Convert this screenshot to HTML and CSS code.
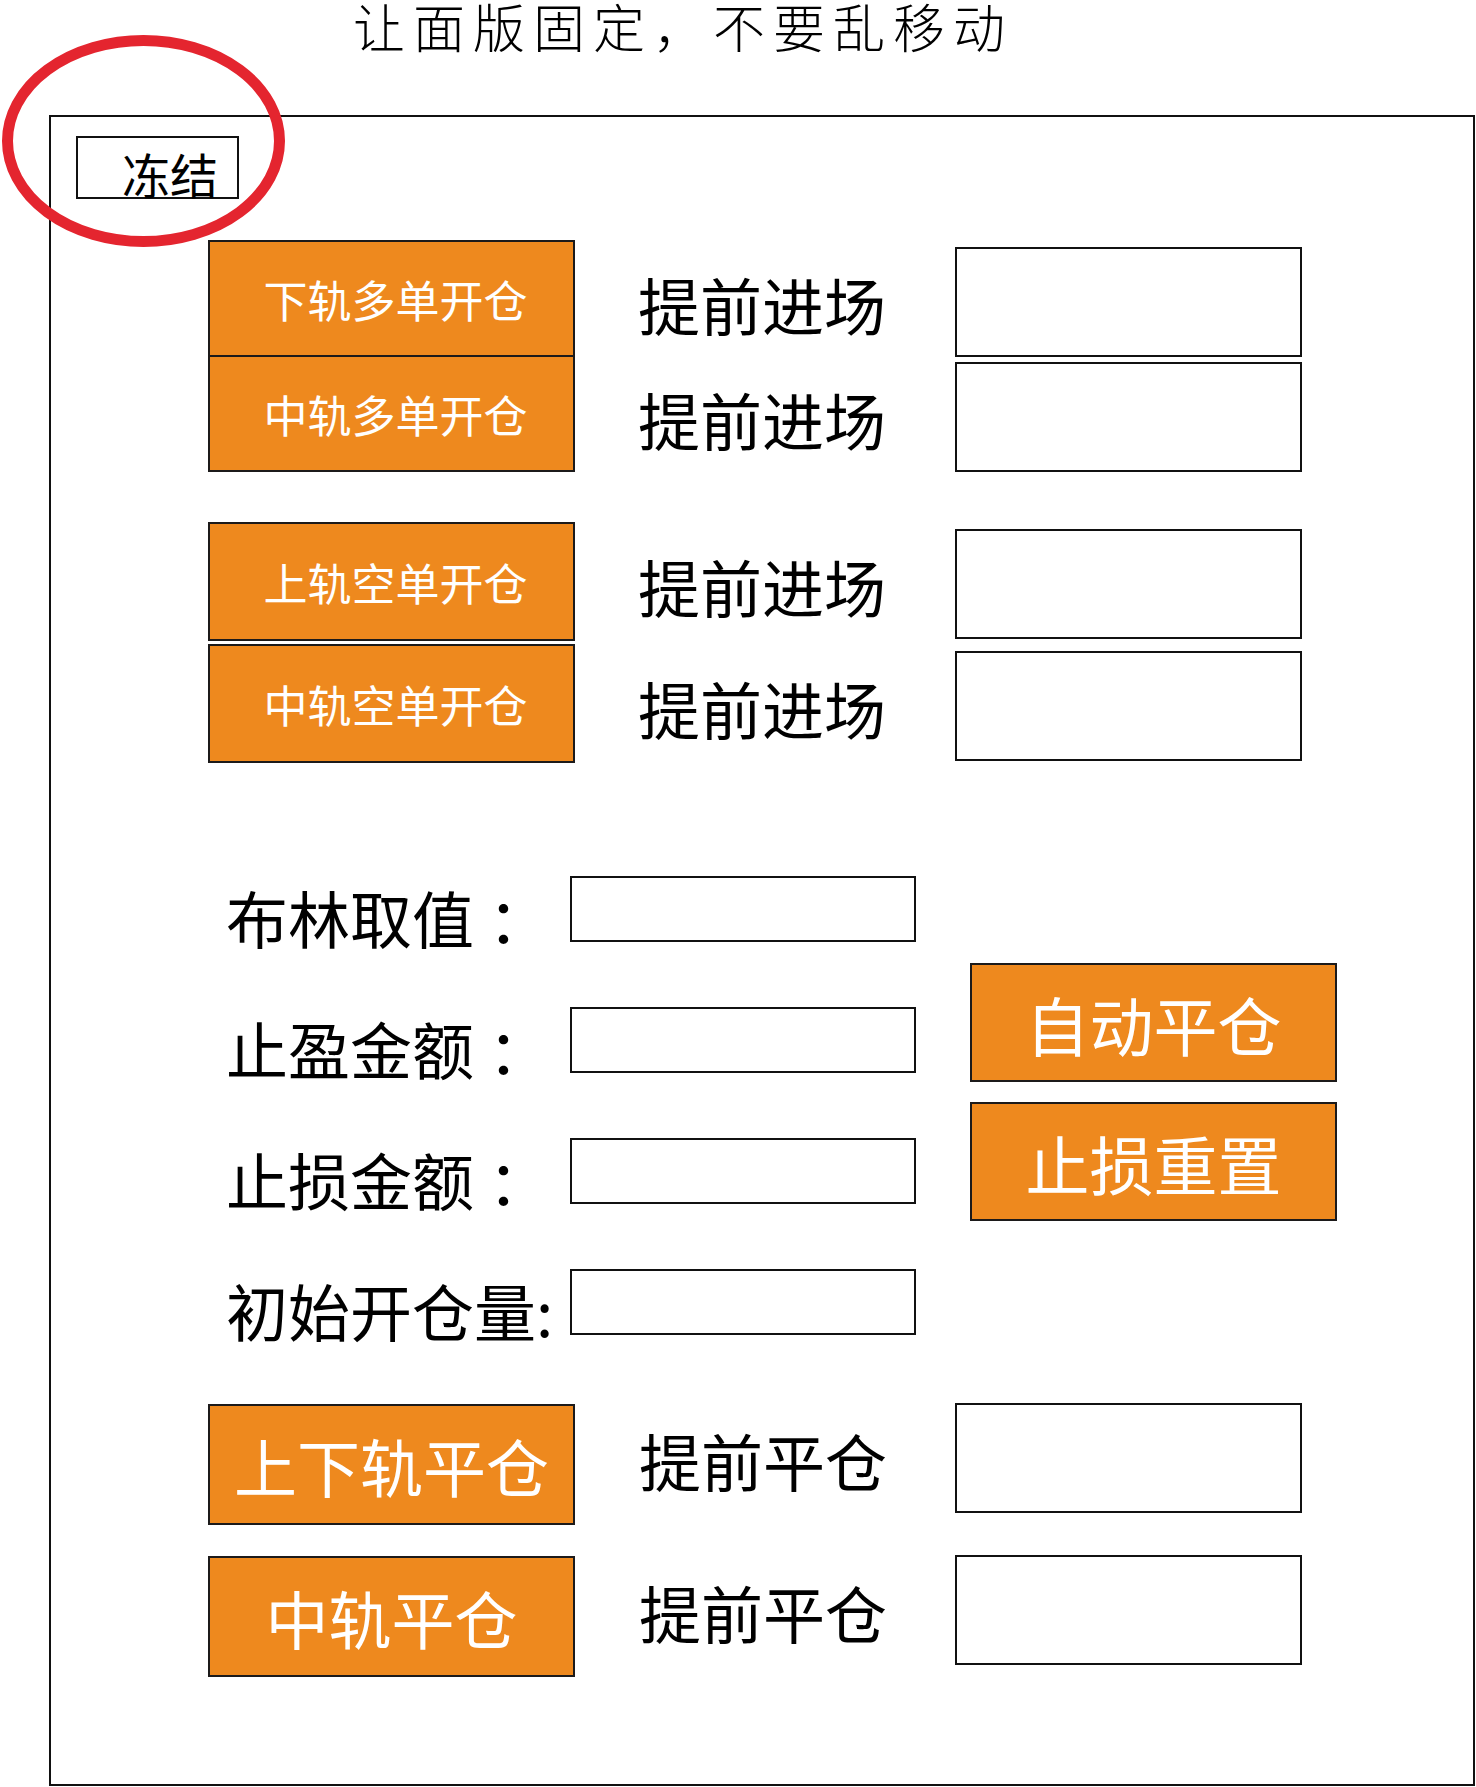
FILE: index.html
```html
<!DOCTYPE html>
<html lang="zh-CN">
<head>
    <meta charset="UTF-8">
    <meta name="viewport" content="width=device-width, initial-scale=1.0">
    <title>面版</title>
    <link rel="stylesheet" href="styles.css">
</head>
<body>
    <h1 class="title">让面版固定，不要乱移动</h1>

    <!-- red mark around the freeze button -->
    <svg class="mark" width="290" height="225" viewBox="0 0 290 225">
        <ellipse cx="143.5" cy="111" rx="136" ry="100.5" fill="none" stroke="#e4252f" stroke-width="11"/>
    </svg>

    <div class="panel">
        <button class="freeze">冻结</button>

        <!-- open positions -->
        <div class="group group-long">
            <div class="row">
                <button class="btn btn-open">下轨多单开仓</button>
                <span class="label">提前进场</span>
                <input class="box" type="text">
            </div>
            <div class="row">
                <button class="btn btn-open">中轨多单开仓</button>
                <span class="label">提前进场</span>
                <input class="box" type="text">
            </div>
        </div>

        <div class="group group-short">
            <div class="row">
                <button class="btn btn-open">上轨空单开仓</button>
                <span class="label">提前进场</span>
                <input class="box" type="text">
            </div>
            <div class="row">
                <button class="btn btn-open">中轨空单开仓</button>
                <span class="label">提前进场</span>
                <input class="box" type="text">
            </div>
        </div>

        <!-- settings -->
        <div class="settings">
            <div class="fields">
                <div class="field">
                    <span class="field-label">布林取值<span class="colon">：</span></span>
                    <input class="field-box" type="text">
                </div>
                <div class="field">
                    <span class="field-label">止盈金额<span class="colon">：</span></span>
                    <input class="field-box" type="text">
                </div>
                <div class="field">
                    <span class="field-label">止损金额<span class="colon">：</span></span>
                    <input class="field-box" type="text">
                </div>
                <div class="field">
                    <span class="field-label">初始开仓量:</span>
                    <input class="field-box" type="text">
                </div>
            </div>
            <div class="side">
                <button class="btn btn-big">自动平仓</button>
                <button class="btn btn-big">止损重置</button>
            </div>
        </div>

        <!-- close positions -->
        <div class="group group-close">
            <div class="row row-close">
                <button class="btn btn-close">上下轨平仓</button>
                <span class="label">提前平仓</span>
                <input class="box" type="text">
            </div>
            <div class="row row-close">
                <button class="btn btn-close">中轨平仓</button>
                <span class="label">提前平仓</span>
                <input class="box" type="text">
            </div>
        </div>
    </div>
</body>
</html>
```

FILE: styles.css
```css
/* General styles */
body {
    margin: 0;
    font-family: "Noto Sans CJK SC", "Noto Sans", sans-serif;
    color: #000;
    background: #fff;
}

.title {
    height: 52px;
    margin: 0;
    padding-left: 353px;
    font-size: 52px;
    line-height: 52px;
    font-weight: 300;
    letter-spacing: 8px;
    white-space: nowrap;
}

.mark {
    position: absolute;
    left: 0;
    top: 30px;
    z-index: 2;
}

.panel {
    box-sizing: border-box;
    width: 1426px;
    height: 1671px;
    margin: 63px 0 0 49px;
    border: 2px solid #111;
    padding: 19px 0 0;
}

/* freeze */
.freeze {
    display: block;
    box-sizing: border-box;
    width: 163px;
    height: 63px;
    margin-left: 25px;
    padding: 10px 0 0 44px;
    border: 2px solid #111;
    background: #fff;
    font-family: inherit;
    font-size: 48px;
    line-height: 48px;
    text-align: left;
    color: #000;
}

/* button rows */
.group {
    padding-left: 157px;
}

.group-long {
    margin-top: 41px;
}

.group-long .row + .row {
    margin-top: -2px;
}

.group-short {
    margin-top: 50px;
}

.group-short .row + .row {
    margin-top: 3px;
}

.group-short .btn-open {
    height: 119px;
}

.row {
    display: flex;
    align-items: flex-start;
}

.btn {
    box-sizing: border-box;
    border: 2px solid #1c1a1a;
    background: #ee891e;
    color: #fff;
    font-family: inherit;
    padding: 0;
    display: flex;
    align-items: center;
    justify-content: center;
}

.btn-open {
    width: 367px;
    height: 117px;
    padding-left: 8px;
    font-size: 44px;
}

.label {
    width: 248px;
    margin: 33px 0 0 63px;
    font-size: 62px;
    line-height: 62px;
    white-space: nowrap;
}

.box {
    box-sizing: border-box;
    width: 347px;
    height: 110px;
    margin: 7px 0 0 69px;
    border: 2px solid #111;
    border-radius: 0;
    background: #fff;
    outline: none;
}

/* settings */
.settings {
    display: flex;
    margin-top: 113px;
    padding-left: 175px;
}

.fields {
    display: flex;
    flex-direction: column;
    gap: 65px;
}

.field {
    display: flex;
    align-items: flex-start;
    height: 66px;
}

.field-label {
    width: 344px;
    margin-top: 10px;
    font-size: 62px;
    line-height: 62px;
    white-space: nowrap;
}

.colon {
    margin-left: 14px;
    font-family: "Noto Sans CJK TC", sans-serif;
}

.field-box {
    box-sizing: border-box;
    width: 346px;
    height: 66px;
    border: 2px solid #111;
    border-radius: 0;
    background: #fff;
    outline: none;
}

.side {
    display: flex;
    flex-direction: column;
    gap: 20px;
    margin: 87px 0 0 54px;
}

.btn-big {
    width: 367px;
    height: 119px;
    font-size: 64px;
}

/* close rows */
.group-close {
    margin-top: 69px;
}

.group-close .row + .row {
    margin-top: 31px;
}

.btn-close {
    width: 367px;
    height: 121px;
    font-size: 63px;
}

.row-close .label {
    margin: 25px 0 0 64px;
}

.row-close .box {
    margin: -1px 0 0 68px;
}
```
